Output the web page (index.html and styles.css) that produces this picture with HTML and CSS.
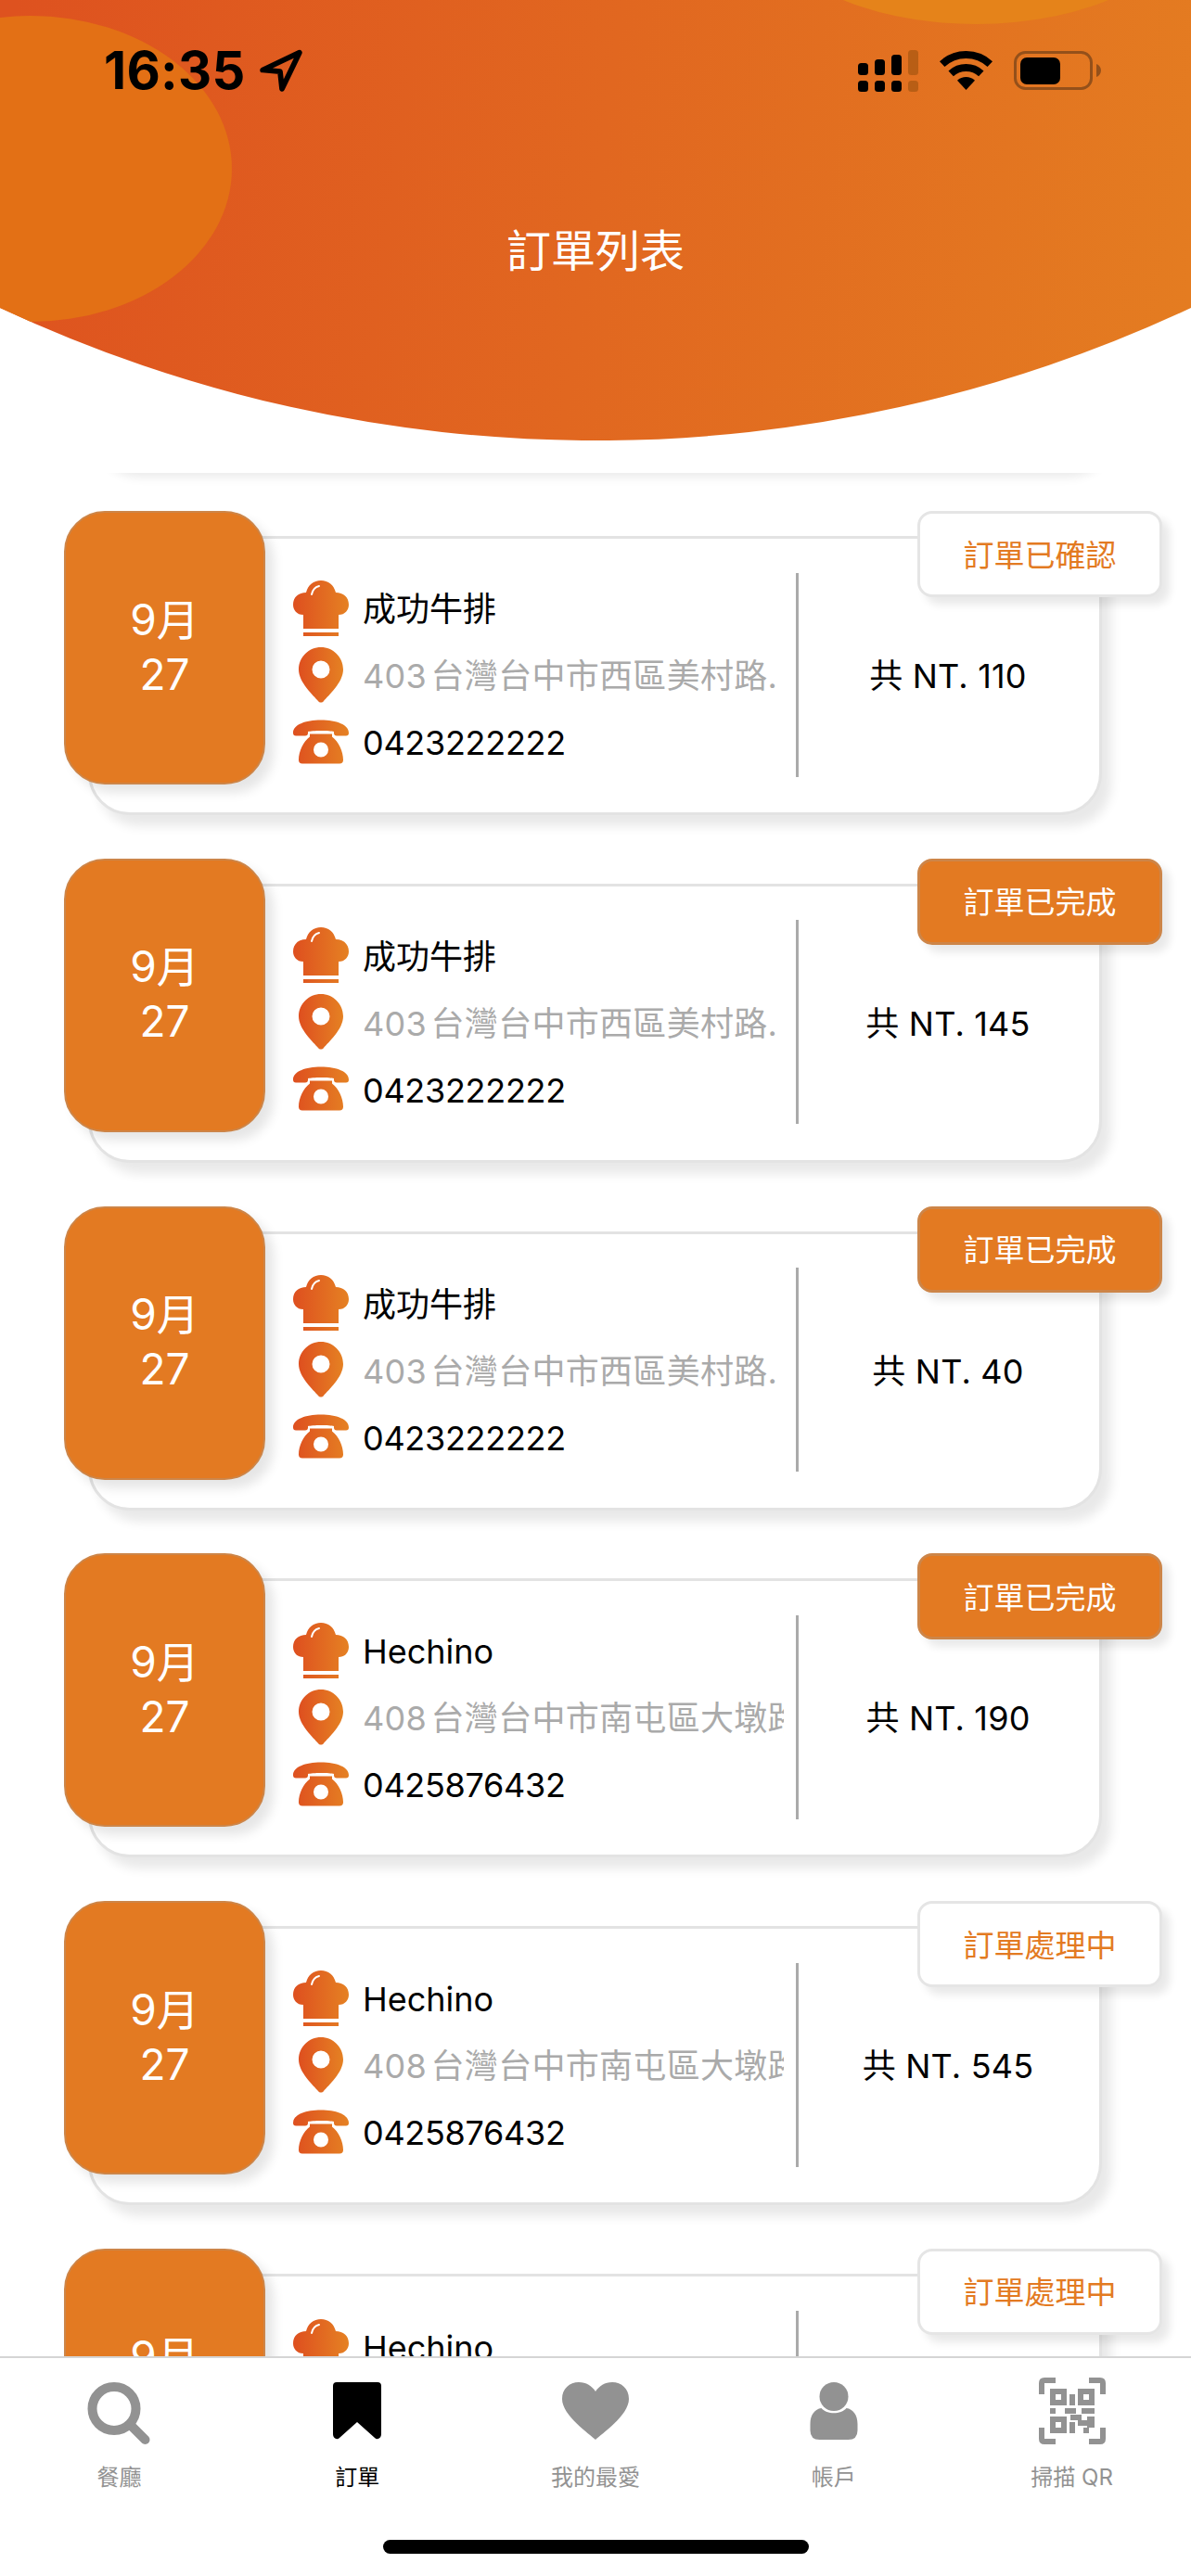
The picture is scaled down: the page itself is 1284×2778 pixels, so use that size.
FILE: index.html
```html
<!DOCTYPE html>
<html lang="zh-Hant">
<head>
<meta charset="utf-8">
<title>訂單列表</title>
<link rel="stylesheet" href="styles.css">
</head>
<body>
<svg class="defs" aria-hidden="true">
  <defs>
    <linearGradient id="brand" x1="0" y1="0" x2="1" y2="0">
      <stop offset="0" stop-color="#DE4F1F"/>
      <stop offset="1" stop-color="#E58123"/>
    </linearGradient>
    <linearGradient id="headerfill" gradientUnits="userSpaceOnUse" x1="0" y1="120" x2="1284" y2="300">
      <stop offset="0" stop-color="#DE521F"/>
      <stop offset="1" stop-color="#E47C21"/>
    </linearGradient>
    <symbol id="hat" viewBox="0 0 60 60">
      <path fill="url(#brand)" d="M11 52V37C4 37 0 32 0 26C0 18 6 13 14 13C16 5 22 0 30 0C38 0 44 5 46 13C54 13 60 18 60 26C60 32 56 37 49 37V52ZM11 56H49V60H11Z"/>
      <path fill="none" stroke="#fff" stroke-width="2" stroke-linecap="round" d="M20 15C21 10 24 7 28 6"/>
    </symbol>
    <symbol id="pin" viewBox="0 0 48 60">
      <path fill="url(#brand)" fill-rule="evenodd" d="M24 0C37 0 48 10.500 48 24C48 38 32 52 27 58C25.500 60 22.500 60 21 58C16 52 0 38 0 24C0 10.500 11 0 24 0ZM24 14.500A9.500 9.500 0 1 0 24 33.500A9.500 9.500 0 1 0 24 14.500Z"/>
    </symbol>
    <symbol id="phone" viewBox="0 0 60 47">
      <path fill="url(#brand)" fill-rule="evenodd" d="M0 14C0 5 13 0 30 0S60 5 60 14Q60 17 57 17H47Q44 17 44 14V12.500C40 11 20 11 16 12.500V14Q16 17 13 17H3Q0 17 0 14ZM18 15H42V18C49 23 54 34 54 43Q54 47 50 47H10Q6 47 6 43C6 34 11 23 18 18ZM30 24A8 8 0 1 0 30 40A8 8 0 1 0 30 24Z"/>
    </symbol>
  </defs>
</svg>

<div class="screen">
  <header class="hero">
    <svg class="hero-bg" viewBox="0 0 1284 475" aria-hidden="true">
      <clipPath id="heroclip"><path d="M0 0H1284V332A1512 1512 0 0 1 0 332Z"/></clipPath>
      <g clip-path="url(#heroclip)">
        <rect width="1284" height="475" fill="url(#headerfill)"/>
        <ellipse cx="33" cy="182" rx="217" ry="165" fill="#E37015"/>
        <ellipse cx="1052" cy="-88" rx="225" ry="114" fill="#E5831A"/>
      </g>
    </svg>
    <div class="status-bar">
      <div class="status-left">
        <span class="clock">16:35</span>
        <svg class="arrow" width="46" height="46" viewBox="0 0 44 44"><path d="M3 21.500L41 3.500L23 41L21 23Z" fill="none" stroke="#000" stroke-width="5.500" stroke-linejoin="round"/></svg>
      </div>
      <div class="status-right">
        <svg width="65" height="45" viewBox="0 0 65 45">
          <g fill="#000">
            <rect x="0" y="14" width="11" height="13" rx="3.500"/><rect x="18" y="10" width="11" height="17" rx="3.500"/><rect x="36" y="5" width="11" height="22" rx="3.500"/>
            <rect x="0" y="33" width="11" height="12" rx="3.500"/><rect x="18" y="33" width="11" height="12" rx="3.500"/><rect x="36" y="33" width="11" height="12" rx="3.500"/>
          </g>
          <g fill="#B85E15"><rect x="54" y="0" width="11" height="27" rx="3.500"/><rect x="54" y="33" width="11" height="12" rx="3.500"/></g>
        </svg>
        <svg width="57" height="42" viewBox="0 0 57 42">
          <path d="M2.700 14.100A38 38 0 0 1 54.300 14.100M12.200 24.400A24 24 0 0 1 44.800 24.400" fill="none" stroke="#000" stroke-width="8"/>
          <path d="M28.500 42L19 31.800A14 14 0 0 1 38 31.800Z" fill="#000"/>
        </svg>
        <svg width="94" height="42" viewBox="0 0 94 42">
          <rect x="1.500" y="1.500" width="82" height="39" rx="11" fill="none" stroke="#94501A" stroke-width="3"/>
          <rect x="7" y="7" width="43" height="29" rx="7" fill="#000"/>
          <path d="M89 14C92 15 94 18 94 21S92 27 89 28Z" fill="#94501A"/>
        </svg>
      </div>
    </div>
    <h1 class="hero-title">訂單列表</h1>
  </header>

  <main class="list">
    <div class="list-edge"></div>

    <article class="order">
      <div class="order-date"><span>9月</span><span>27</span></div>
      <div class="order-card">
        <div class="order-info">
          <div class="info-row"><svg class="icon"><use href="#hat"/></svg><span class="info-name">成功牛排</span></div>
          <div class="info-row"><svg class="icon"><use href="#pin"/></svg><span class="info-addr">403 台灣台中市西區美村路.</span></div>
          <div class="info-row"><svg class="icon"><use href="#phone"/></svg><span class="info-tel">0423222222</span></div>
        </div>
        <div class="order-total">共 NT. 110</div>
      </div>
      <div class="order-badge">訂單已確認</div>
    </article>

    <article class="order">
      <div class="order-date"><span>9月</span><span>27</span></div>
      <div class="order-card">
        <div class="order-info">
          <div class="info-row"><svg class="icon"><use href="#hat"/></svg><span class="info-name">成功牛排</span></div>
          <div class="info-row"><svg class="icon"><use href="#pin"/></svg><span class="info-addr">403 台灣台中市西區美村路.</span></div>
          <div class="info-row"><svg class="icon"><use href="#phone"/></svg><span class="info-tel">0423222222</span></div>
        </div>
        <div class="order-total">共 NT. 145</div>
      </div>
      <div class="order-badge is-done">訂單已完成</div>
    </article>

    <article class="order">
      <div class="order-date"><span>9月</span><span>27</span></div>
      <div class="order-card">
        <div class="order-info">
          <div class="info-row"><svg class="icon"><use href="#hat"/></svg><span class="info-name">成功牛排</span></div>
          <div class="info-row"><svg class="icon"><use href="#pin"/></svg><span class="info-addr">403 台灣台中市西區美村路.</span></div>
          <div class="info-row"><svg class="icon"><use href="#phone"/></svg><span class="info-tel">0423222222</span></div>
        </div>
        <div class="order-total">共 NT. 40</div>
      </div>
      <div class="order-badge is-done">訂單已完成</div>
    </article>

    <article class="order">
      <div class="order-date"><span>9月</span><span>27</span></div>
      <div class="order-card">
        <div class="order-info">
          <div class="info-row"><svg class="icon"><use href="#hat"/></svg><span class="info-name">Hechino</span></div>
          <div class="info-row"><svg class="icon"><use href="#pin"/></svg><span class="info-addr">408 台灣台中市南屯區大墩路</span></div>
          <div class="info-row"><svg class="icon"><use href="#phone"/></svg><span class="info-tel">0425876432</span></div>
        </div>
        <div class="order-total">共 NT. 190</div>
      </div>
      <div class="order-badge is-done">訂單已完成</div>
    </article>

    <article class="order">
      <div class="order-date"><span>9月</span><span>27</span></div>
      <div class="order-card">
        <div class="order-info">
          <div class="info-row"><svg class="icon"><use href="#hat"/></svg><span class="info-name">Hechino</span></div>
          <div class="info-row"><svg class="icon"><use href="#pin"/></svg><span class="info-addr">408 台灣台中市南屯區大墩路</span></div>
          <div class="info-row"><svg class="icon"><use href="#phone"/></svg><span class="info-tel">0425876432</span></div>
        </div>
        <div class="order-total">共 NT. 545</div>
      </div>
      <div class="order-badge">訂單處理中</div>
    </article>

    <article class="order">
      <div class="order-date"><span>9月</span><span>27</span></div>
      <div class="order-card is-partial">
        <div class="order-info">
          <div class="info-row"><svg class="icon"><use href="#hat"/></svg><span class="info-name">Hechino</span></div>
        </div>
        <div class="order-total"></div>
      </div>
      <div class="order-badge">訂單處理中</div>
    </article>
  </main>

  <nav class="tabbar">
    <div class="tabs">
      <div class="tab">
        <svg class="tab-icon" viewBox="-2.500 -5 72 72"><circle cx="28.500" cy="28.500" r="23.500" fill="none" stroke="#929292" stroke-width="10"/><path d="M46 46L62 62" fill="none" stroke="#929292" stroke-width="10" stroke-linecap="round"/></svg>
        <span class="tab-label">餐廳</span>
      </div>
      <div class="tab is-active">
        <svg class="tab-icon" viewBox="-10 -5 72 72"><path d="M4 0H48Q52 0 52 4V56C52 60 48 63 45 60L26 43L7 60C4 63 0 60 0 56V4Q0 0 4 0Z" fill="#000"/></svg>
        <span class="tab-label">訂單</span>
      </div>
      <div class="tab">
        <svg class="tab-icon" viewBox="0 -5 72 72"><path d="M36 62C30 56 0 36 0 18C0 7 8 0 18 0C26 0 32 4 36 10C40 4 46 0 54 0C64 0 72 7 72 18C72 36 42 56 36 62Z" fill="#929292"/></svg>
        <span class="tab-label">我的最愛</span>
      </div>
      <div class="tab">
        <svg class="tab-icon" viewBox="-10.500 -5 72 72"><circle cx="25.500" cy="15.500" r="15.500" fill="#929292"/><path d="M12 28C18 35 33 35 39 28C46 29 51 35 51 45V52Q51 62 41 62H10Q0 62 0 52V45C0 35 5 29 12 28Z" fill="#929292"/></svg>
        <span class="tab-label">帳戶</span>
      </div>
      <div class="tab">
        <svg class="tab-icon" viewBox="0 0 72 72">
          <path d="M3 18V6Q3 3 6 3H18M54 3H66Q69 3 69 6V18M3 54V66Q3 69 6 69H18M54 69H66Q69 69 69 66V54" fill="none" stroke="#929292" stroke-width="6"/>
          <path fill="#929292" fill-rule="evenodd" d="M12 12H30V30H12ZM18 18V24H24V18ZM42 12H60V30H42ZM48 18V24H54V18ZM33 18H39V30H33ZM12 33H18V39H12ZM28 33H40V39H28ZM46 33H60V39H46ZM12 42H30V60H12ZM18 48V54H24V48ZM34 40H46V46H34ZM52 42H60V54H52ZM33 48H39V60H33ZM42 46H52V52H42ZM48 54H54V60H48Z"/>
        </svg>
        <span class="tab-label">掃描 QR</span>
      </div>
    </div>
    <div class="home-indicator"></div>
  </nav>
</div>
</body>
</html>
```

FILE: styles.css
```css
* { box-sizing: border-box; }
html, body { margin: 0; padding: 0; background: #fff; }
body { font-family: "Inter", "Noto Sans CJK TC", sans-serif; color: #000; }

.defs { position: absolute; width: 0; height: 0; }

.screen {
  width: 1284px;
  height: 2778px;
  display: flex;
  flex-direction: column;
  overflow: hidden;
  background: #fff;
}

/* Header */
.hero {
  position: relative;
  flex: 0 0 475px;
  padding-top: 53px;
}
.hero-bg { position: absolute; inset: 0; width: 1284px; height: 475px; }
.status-bar {
  position: relative;
  display: flex;
  justify-content: space-between;
  align-items: center;
  height: 46px;
  padding: 0 97px 0 112px;
}
.status-left { display: flex; align-items: center; gap: 15px; }
.clock { font-size: 56px; font-weight: 700; line-height: 46px; letter-spacing: .3px; }
.arrow { display: block; }
.status-right { display: flex; align-items: center; gap: 23px; }
.status-right svg { display: block; }
.hero-title {
  position: relative;
  margin: 142px 0 0;
  text-align: center;
  font-size: 48px;
  font-weight: 400;
  line-height: 60px;
  color: #fff;
}

/* List */
.list {
  flex: 1 1 auto;
  min-height: 0;
  overflow: hidden;
  margin-top: 35px;
}
.list-edge {
  position: relative;
  height: 41px;
  overflow: hidden;
}
.list-edge::before {
  content: "";
  position: absolute;
  left: 95px;
  width: 1093px;
  top: -300px;
  height: 292px;
  border-radius: 45px;
  box-shadow: 10px 12px 12px rgba(0, 0, 0, .09);
}
.order {
  position: relative;
  height: 374.8px;
  padding-top: 27px;
}
.order-card {
  display: flex;
  align-items: center;
  width: 1093px;
  height: 301px;
  margin-left: 95px;
  padding: 0 0 2px 218px;
  background: #fff;
  border: 3px solid #e3e3e3;
  border-radius: 45px;
  box-shadow: 10px 12px 12px rgba(0, 0, 0, .09);
}
.order-card.is-partial {
  align-items: flex-start;
  padding-top: 40px;
}
.order-info {
  width: 529px;
  display: flex;
  flex-direction: column;
}
.info-row {
  display: flex;
  align-items: center;
  gap: 15px;
  height: 72px;
  font-size: 36px;
  line-height: 48px;
  white-space: nowrap;
  overflow: hidden;
}
.info-row span { padding-top: 3px; }
.icon { flex: 0 0 60px; width: 60px; height: 60px; }
.info-addr { color: #aaa; overflow: hidden; word-spacing: -6px; letter-spacing: .3px; }
.info-tel { letter-spacing: -.3px; }
.order-total {
  flex: 1;
  align-self: center;
  height: 220px;
  margin-left: 13px;
  padding: 0 2px 3px 0;
  border-left: 3px solid #aaa;
  display: flex;
  align-items: center;
  justify-content: center;
  font-size: 36px;
  letter-spacing: .2px;
  white-space: nowrap;
}
.is-partial .order-total { align-self: flex-start; margin-top: -3px; }
.order-date {
  position: absolute;
  left: 69px;
  top: 0;
  width: 217px;
  height: 295px;
  display: flex;
  flex-direction: column;
  align-items: center;
  justify-content: center;
  padding-bottom: 2px;
  font-size: 46px;
  line-height: 59px;
  color: #fff;
  background: #E37A22;
  border: 2px solid #CD8548;
  border-radius: 44px;
  box-shadow: 9px 9px 12px rgba(0, 0, 0, .1);
}
.order-badge {
  position: absolute;
  left: 989px;
  top: 0;
  width: 264px;
  height: 93px;
  display: flex;
  align-items: center;
  justify-content: center;
  padding-bottom: 2px;
  font-size: 33px;
  color: #E37A22;
  background: #fff;
  border: 3px solid #e5e5e5;
  border-radius: 16px;
  box-shadow: 8px 8px 10px rgba(0, 0, 0, .09);
}
.order-badge.is-done {
  color: #fff;
  background: #E37A22;
  border-color: #CD8548;
}

/* Tab bar */
.tabbar {
  flex: 0 0 237px;
  background: #fff;
  border-top: 2px solid #d5d5d5;
  padding-top: 21px;
}
.tabs { display: grid; grid-template-columns: repeat(5, 1fr); }
.tab {
  display: flex;
  flex-direction: column;
  align-items: center;
  color: #929292;
}
.tab.is-active { color: #000; }
.tab-icon { display: block; width: 72px; height: 72px; }
.tab-label { margin-top: 20px; font-size: 24px; line-height: 32px; }
.home-indicator {
  width: 459px;
  height: 15px;
  margin: 51px auto 0;
  background: #000;
  border-radius: 8px;
}
```
